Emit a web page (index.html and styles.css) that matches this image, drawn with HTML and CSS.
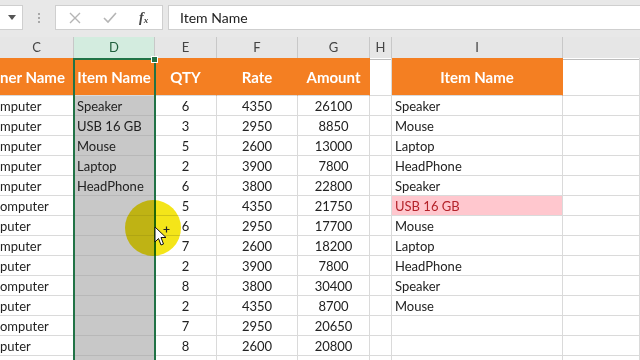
FILE: index.html
```html
<!DOCTYPE html>
<html>
<head>
<meta charset="utf-8">
<link rel="stylesheet" href="styles.css">
</head>
<body>
<div class="app">
  <div class="toolbar">
    <div class="namebox"><svg width="8" height="5" viewBox="0 0 8 5"><path d="M0 0 H8 L4 5 Z" fill="#555"/></svg></div>
    <div class="grip"><i></i><i></i><i></i></div>
    <div class="fbtns">
      <svg class="ic" width="12" height="12" viewBox="0 0 12 12"><path d="M1 1 L11 11 M11 1 L1 11" stroke="#b5b5b5" stroke-width="1.4" fill="none"/></svg>
      <svg class="ic" width="14" height="12" viewBox="0 0 14 12"><path d="M1 6 L5 10 L13 1" stroke="#b5b5b5" stroke-width="1.6" fill="none"/></svg>
      <span class="fx">f<sub>x</sub></span>
    </div>
    <div class="formula">Item Name</div>
  </div>

  <div class="colheads">
    <div class="ch">C</div>
    <div class="ch sel">D</div>
    <div class="ch">E</div>
    <div class="ch">F</div>
    <div class="ch">G</div>
    <div class="ch">H</div>
    <div class="ch">I</div>
    <div class="ch last"></div>
  </div>

  <div class="sheet">
    <div class="c hd left">ner Name</div>
    <div class="c hd">Item Name</div>
    <div class="c hd">QTY</div>
    <div class="c hd">Rate</div>
    <div class="c hd">Amount</div>
    <div class="c"></div>
    <div class="c hd">Item Name</div>
    <div class="c"></div>

    <div class="c cl">mputer</div><div class="c g">Speaker</div><div class="c n">6</div><div class="c n">4350</div><div class="c n">26100</div><div class="c"></div><div class="c t">Speaker</div><div class="c"></div>
    <div class="c cl">mputer</div><div class="c g">USB 16 GB</div><div class="c n">3</div><div class="c n">2950</div><div class="c n">8850</div><div class="c"></div><div class="c t">Mouse</div><div class="c"></div>
    <div class="c cl">mputer</div><div class="c g">Mouse</div><div class="c n">5</div><div class="c n">2600</div><div class="c n">13000</div><div class="c"></div><div class="c t">Laptop</div><div class="c"></div>
    <div class="c cl">mputer</div><div class="c g">Laptop</div><div class="c n">2</div><div class="c n">3900</div><div class="c n">7800</div><div class="c"></div><div class="c t">HeadPhone</div><div class="c"></div>
    <div class="c cl">mputer</div><div class="c g">HeadPhone</div><div class="c n">6</div><div class="c n">3800</div><div class="c n">22800</div><div class="c"></div><div class="c t">Speaker</div><div class="c"></div>
    <div class="c cl">omputer</div><div class="c g"></div><div class="c n">5</div><div class="c n">4350</div><div class="c n">21750</div><div class="c"></div><div class="c t dup">USB 16 GB</div><div class="c"></div>
    <div class="c cl">puter</div><div class="c g"></div><div class="c n">6</div><div class="c n">2950</div><div class="c n">17700</div><div class="c"></div><div class="c t">Mouse</div><div class="c"></div>
    <div class="c cl">mputer</div><div class="c g"></div><div class="c n">7</div><div class="c n">2600</div><div class="c n">18200</div><div class="c"></div><div class="c t">Laptop</div><div class="c"></div>
    <div class="c cl">puter</div><div class="c g"></div><div class="c n">2</div><div class="c n">3900</div><div class="c n">7800</div><div class="c"></div><div class="c t">HeadPhone</div><div class="c"></div>
    <div class="c cl">omputer</div><div class="c g"></div><div class="c n">8</div><div class="c n">3800</div><div class="c n">30400</div><div class="c"></div><div class="c t">Speaker</div><div class="c"></div>
    <div class="c cl">puter</div><div class="c g"></div><div class="c n">2</div><div class="c n">4350</div><div class="c n">8700</div><div class="c"></div><div class="c t">Mouse</div><div class="c"></div>
    <div class="c cl">omputer</div><div class="c g"></div><div class="c n">7</div><div class="c n">2950</div><div class="c n">20650</div><div class="c"></div><div class="c t"></div><div class="c"></div>
    <div class="c cl">puter</div><div class="c g"></div><div class="c n">8</div><div class="c n">2600</div><div class="c n">20800</div><div class="c"></div><div class="c t"></div><div class="c"></div>
    <div class="c cl"></div><div class="c g"></div><div class="c n"></div><div class="c n"></div><div class="c n"></div><div class="c"></div><div class="c t"></div><div class="c"></div>

    <div class="selection"><span class="handle"></span></div>
    <div class="spot"></div>
    <svg class="pointer" width="14" height="22" viewBox="0 0 14 22"><path d="M1 1 L1 16 L4.5 12.5 L7 19 L9.5 18 L7 11.5 L12 11.5 Z" fill="#fff" stroke="#111" stroke-width="1" stroke-linejoin="round"/></svg>
    <svg class="plus" width="7" height="7" viewBox="0 0 7 7"><path d="M3.5 0.5 V6.5 M0.5 3.5 H6.5" stroke="#222" stroke-width="1.2"/></svg>
  </div>
</div>
</body>
</html>
```

FILE: styles.css
```css
html, body {
  margin: 0;
  padding: 0;
  width: 640px;
  height: 360px;
  overflow: hidden;
  background: #fff;
  font-family: Lato, "Liberation Sans", sans-serif;
}

.app {
  width: 640px;
  height: 360px;
  overflow: hidden;
}

.toolbar {
  height: 37px;
  box-sizing: border-box;
  background: #e8e8e8;
  display: flex;
  align-items: flex-start;
  padding-top: 5px;
}

.namebox {
  width: 23px;
  height: 25px;
  box-sizing: border-box;
  background: #fff;
  border: 1px solid #cfcfcf;
  border-left: none;
  display: flex;
  align-items: center;
  justify-content: flex-end;
  padding-right: 6px;
}

.grip {
  width: 32px;
  height: 25px;
  display: flex;
  flex-direction: column;
  align-items: center;
  justify-content: center;
  gap: 2px;
}

.grip i {
  display: block;
  width: 2px;
  height: 2px;
  background: #a8a8a8;
}

.fbtns {
  width: 108px;
  height: 25px;
  box-sizing: border-box;
  background: #fff;
  border: 1px solid #cfcfcf;
  display: flex;
  align-items: center;
  padding-left: 13px;
}

.fbtns .ic:first-child {
  margin-right: 22px;
}

.fbtns .ic + .ic {
  margin-right: 22px;
}

.fx {
  font-family: "Liberation Serif", serif;
  font-style: italic;
  font-size: 14px;
  color: #444;
  font-weight: bold;
}

.fx sub {
  font-size: 9px;
  vertical-align: -1px;
}

.formula {
  flex: 1;
  margin-left: 5px;
  height: 25px;
  box-sizing: border-box;
  background: #fff;
  border: 1px solid #cfcfcf;
  border-right: none;
  font-size: 14px;
  line-height: 23px;
  padding-left: 11px;
  color: #222;
}

.colheads {
  display: grid;
  grid-template-columns: 74px 81px 62px 81px 72px 22px 171px 1fr;
  height: 21px;
  background: #e6e6e6;
}

.ch {
  box-sizing: border-box;
  border-right: 1px solid #c8c8c8;
  border-bottom: 1px solid #bdbdbd;
  text-align: center;
  font-size: 13px;
  line-height: 21px;
  color: #444;
}

.ch.sel {
  background: #d3ecdf;
  color: #1f5f3c;
  border-bottom: 2px solid #217346;
}

.ch.last {
  border-right: none;
}

.sheet {
  position: relative;
  display: grid;
  grid-template-columns: 74px 81px 62px 81px 72px 22px 171px 1fr;
  grid-template-rows: 38px repeat(14, 20px);
}

.c {
  box-sizing: border-box;
  border-right: 1px solid #dadada;
  border-bottom: 1px solid #dadada;
  font-size: 13px;
  line-height: 20px;
  color: #222;
  white-space: nowrap;
  overflow: hidden;
}

.c.hd {
  background: #f47f22;
  color: #fff;
  font-weight: bold;
  font-size: 15px;
  line-height: 38px;
  text-align: center;
  border-right-color: #f47f22;
}

.c.hd.left {
  text-align: left;
  padding-left: 0;
}

.c.cl {
  padding-left: 0;
}

.c.g {
  background: #c8c8c8;
  border-bottom-color: #b8b8b8;
  padding-left: 3px;
}

.c.n {
  text-align: center;
}

.c.t {
  padding-left: 3px;
}

.c.dup {
  background: #ffc7ce;
  color: #b4232a;
}

.selection {
  position: absolute;
  left: 73px;
  top: 0;
  width: 83px;
  height: 320px;
  box-sizing: border-box;
  border: 2px solid #217346;
  pointer-events: none;
}

.handle {
  position: absolute;
  right: -4px;
  top: -4px;
  width: 5px;
  height: 5px;
  background: #217346;
  border: 1px solid #fff;
}

.spot {
  position: absolute;
  left: 125px;
  top: 142px;
  width: 56px;
  height: 56px;
  border-radius: 50%;
  background: #f4e40c;
  mix-blend-mode: multiply;
  opacity: 0.95;
}

.pointer {
  position: absolute;
  left: 154px;
  top: 168px;
}

.plus {
  position: absolute;
  left: 163px;
  top: 168px;
}
```
